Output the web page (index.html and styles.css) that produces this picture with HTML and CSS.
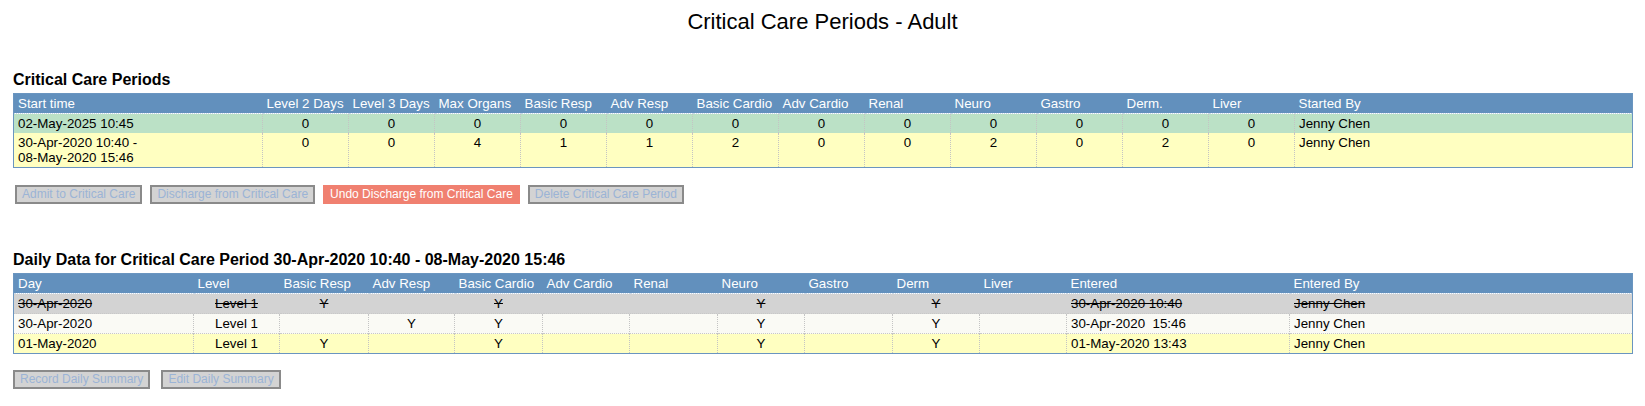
FILE: index.html
```html
<!DOCTYPE html>
<html>
<head>
<meta charset="utf-8">
<link rel="stylesheet" href="styles.css">
</head>
<body>
<h1 class="title">Critical Care Periods - Adult</h1>
<div class="wrap">
  <h2 class="heading h-first">Critical Care Periods</h2>
  <table class="grid">
    <colgroup>
      <col style="width:249px">
      <col style="width:86px"><col style="width:86px"><col style="width:86px"><col style="width:86px">
      <col style="width:86px"><col style="width:86px"><col style="width:86px"><col style="width:86px">
      <col style="width:86px"><col style="width:86px"><col style="width:86px"><col style="width:86px">
      <col>
    </colgroup>
    <thead>
      <tr>
        <th>Start time</th><th>Level 2 Days</th><th>Level 3 Days</th><th>Max Organs</th><th>Basic Resp</th><th>Adv Resp</th><th>Basic Cardio</th><th>Adv Cardio</th><th>Renal</th><th>Neuro</th><th>Gastro</th><th>Derm.</th><th>Liver</th><th>Started By</th>
      </tr>
    </thead>
    <tbody>
      <tr class="r-green">
        <td>02-May-2025 10:45</td><td class="c">0</td><td class="c">0</td><td class="c">0</td><td class="c">0</td><td class="c">0</td><td class="c">0</td><td class="c">0</td><td class="c">0</td><td class="c">0</td><td class="c">0</td><td class="c">0</td><td class="c">0</td><td>Jenny Chen</td>
      </tr>
      <tr class="r-yellow">
        <td>30-Apr-2020 10:40 -<br>08-May-2020 15:46</td><td class="c">0</td><td class="c">0</td><td class="c">4</td><td class="c">1</td><td class="c">1</td><td class="c">2</td><td class="c">0</td><td class="c">0</td><td class="c">2</td><td class="c">0</td><td class="c">2</td><td class="c">0</td><td>Jenny Chen</td>
      </tr>
    </tbody>
  </table>
  <div class="buttons b-top">
    <button class="btn" disabled>Admit to Critical Care</button>
    <button class="btn" disabled>Discharge from Critical Care</button>
    <button class="btn btn-active">Undo Discharge from Critical Care</button>
    <button class="btn" disabled>Delete Critical Care Period</button>
  </div>

  <h2 class="heading h-second">Daily Data for Critical Care Period 30-Apr-2020 10:40 - 08-May-2020 15:46</h2>
  <table class="grid grid2">
    <colgroup>
      <col style="width:180px">
      <col style="width:86px"><col style="width:89px"><col style="width:86px"><col style="width:88px">
      <col style="width:87px"><col style="width:88px"><col style="width:87px"><col style="width:88px">
      <col style="width:87px"><col style="width:87px">
      <col style="width:223px">
      <col>
    </colgroup>
    <thead>
      <tr>
        <th>Day</th><th>Level</th><th>Basic Resp</th><th>Adv Resp</th><th>Basic Cardio</th><th>Adv Cardio</th><th>Renal</th><th>Neuro</th><th>Gastro</th><th>Derm</th><th>Liver</th><th>Entered</th><th>Entered By</th>
      </tr>
    </thead>
    <tbody>
      <tr class="r-gray struck">
        <td>30-Apr-2020</td><td class="c">Level 1</td><td class="c">Y</td><td class="c"></td><td class="c">Y</td><td class="c"></td><td class="c"></td><td class="c">Y</td><td class="c"></td><td class="c">Y</td><td class="c"></td><td>30-Apr-2020 10:40</td><td>Jenny Chen</td>
      </tr>
      <tr class="r-white">
        <td>30-Apr-2020</td><td class="c">Level 1</td><td class="c"></td><td class="c">Y</td><td class="c">Y</td><td class="c"></td><td class="c"></td><td class="c">Y</td><td class="c"></td><td class="c">Y</td><td class="c"></td><td>30-Apr-2020&nbsp; 15:46</td><td>Jenny Chen</td>
      </tr>
      <tr class="r-yellow">
        <td>01-May-2020</td><td class="c">Level 1</td><td class="c">Y</td><td class="c"></td><td class="c">Y</td><td class="c"></td><td class="c"></td><td class="c">Y</td><td class="c"></td><td class="c">Y</td><td class="c"></td><td>01-May-2020 13:43</td><td>Jenny Chen</td>
      </tr>
    </tbody>
  </table>
  <div class="buttons b-bottom">
    <button class="btn" disabled>Record Daily Summary</button>
    <button class="btn" disabled>Edit Daily Summary</button>
  </div>
</div>
</body>
</html>
```

FILE: styles.css
```css
html, body {
  margin: 0;
  padding: 0;
  background: #ffffff;
  font-family: "Liberation Sans", Arial, sans-serif;
  color: #000;
}

.title {
  margin: 9px 0 0 0;
  font-size: 22px;
  line-height: 26px;
  font-weight: normal;
  text-align: center;
}

.wrap {
  padding: 0 12px 0 13px;
}

.heading {
  font-size: 16px;
  line-height: 19px;
  font-weight: bold;
  margin: 0 0 4px 0;
}

.h-first {
  margin-top: 35px;
}

.h-second {
  margin-top: 46px;
}

.grid {
  width: 1620px;
  table-layout: fixed;
  border-collapse: collapse;
  border: 1px solid #6a95c0;
  font-size: 10pt;
  line-height: 15px;
}

.grid th {
  background: #6290bd;
  color: #ffffff;
  font-weight: normal;
  text-align: left;
  padding: 2px 4px;
  border-bottom: 1px dotted #c9d9ea;
  white-space: nowrap;
  overflow: hidden;
}

.grid td {
  padding: 2px 4px;
  vertical-align: top;
  border-left: 1px dotted #c4c4c4;
  white-space: nowrap;
}

.grid td:first-child {
  border-left: 1px solid #6a95c0;
}

.grid td.c {
  text-align: center;
}

.grid2 tbody tr + tr td {
  border-top: 1px dotted #c8c8c8;
}

.r-green td { background: #bbe1c6; }
.r-yellow td { background: #ffffc1; }
.r-gray td { background: #d3d3d3; border-left-color: #d3d3d3; }
.r-white td { background: #fafaf5; }

.struck td {
  text-decoration: line-through;
}

.buttons {
  display: flex;
  align-items: flex-start;
}

.b-top {
  margin-top: 17px;
  padding-left: 2px;
  gap: 8px;
}

.b-bottom {
  margin-top: 16px;
  gap: 11px;
}

.btn {
  font-family: "Liberation Sans", Arial, sans-serif;
  font-size: 12px;
  line-height: 15px;
  height: 19px;
  padding: 0 5px;
  margin: 0;
  border: 2px solid #8a8a8a;
  background: #d3d3d3;
  color: #9bb4d6;
  border-radius: 0;
  white-space: nowrap;
}

.btn-active {
  background: #f08070;
  border-color: #f08070;
  color: #ffffff;
}
```
